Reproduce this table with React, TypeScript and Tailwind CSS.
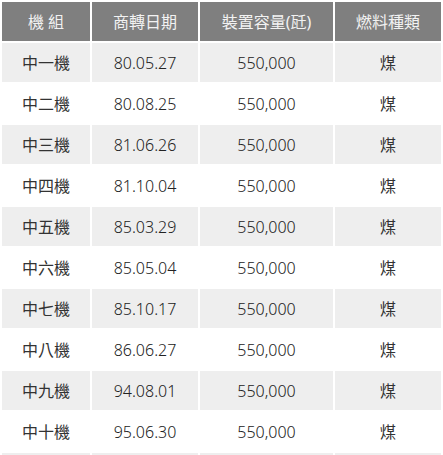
const rows = [
  ["中一機", "80.05.27", "550,000", "煤"],
  ["中二機", "80.08.25", "550,000", "煤"],
  ["中三機", "81.06.26", "550,000", "煤"],
  ["中四機", "81.10.04", "550,000", "煤"],
  ["中五機", "85.03.29", "550,000", "煤"],
  ["中六機", "85.05.04", "550,000", "煤"],
  ["中七機", "85.10.17", "550,000", "煤"],
  ["中八機", "86.06.27", "550,000", "煤"],
  ["中九機", "94.08.01", "550,000", "煤"],
  ["中十機", "95.06.30", "550,000", "煤"],
];

const App = () => {
  return (
    <div className="bg-white w-[443px] font-['Noto_Sans','Noto_Sans_CJK_TC',sans-serif]">
      <table className="w-[443px] border-separate border-spacing-[2px] table-fixed text-[16px]">
        <colgroup>
          <col className="w-[88px]" />
          <col className="w-[106px]" />
          <col className="w-[133px]" />
          <col className="w-[106px]" />
        </colgroup>
        <thead>
          <tr className="h-[39px] bg-[#7f7f7f] text-[#f2f2f2]">
            <th className="font-normal">機 組</th>
            <th className="font-normal">商轉日期</th>
            <th className="font-normal">裝置容量(瓩)</th>
            <th className="font-normal">燃料種類</th>
          </tr>
        </thead>
        <tbody className="text-[#333]">
          {rows.map((r, i) => (
            <tr key={r[0]} className={`h-[39px] ${i % 2 === 0 ? "bg-[#eeeeee]" : "bg-white"}`}>
              <td className="text-center">{r[0]}</td>
              <td className="text-center font-light text-[#222]">{r[1]}</td>
              <td className="text-center font-light text-[#222]">{r[2]}</td>
              <td className="text-center">{r[3]}</td>
            </tr>
          ))}
          <tr className="h-[39px] bg-[#eeeeee]">
            <td />
            <td />
            <td />
            <td />
          </tr>
        </tbody>
      </table>
    </div>
  );
};

export default App;
